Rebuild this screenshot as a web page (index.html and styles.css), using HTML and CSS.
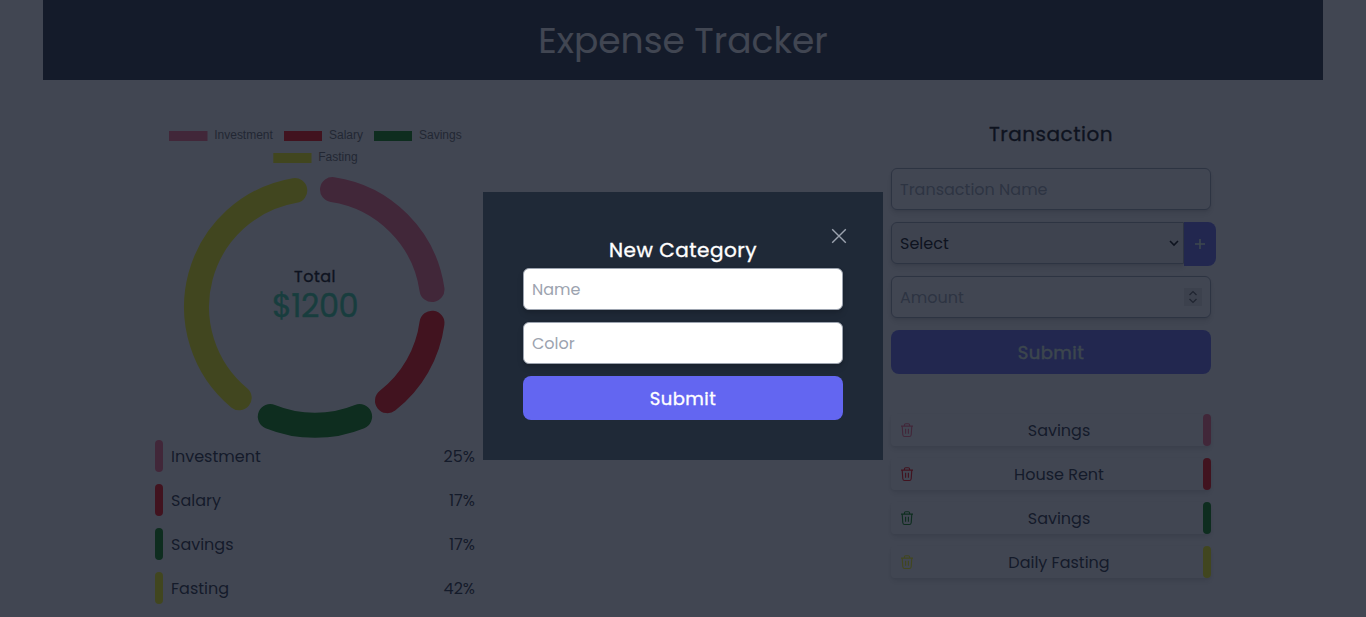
FILE: index.html
```html
<!DOCTYPE html>
<html lang="en">
<head>
<meta charset="utf-8">
<title>Expense Tracker</title>
<link rel="stylesheet" href="styles.css">
</head>
<body>
<svg width="0" height="0" class="sprite">
  <symbol id="trash" viewBox="0 0 16 16">
    <path d="M2 4.1h12M5.4 4V3q0-1.3 1.3-1.3h2.6q1.3 0 1.3 1.3v1M3.2 4.3l.6 8.5q.2 1.7 1.8 1.7h4.8q1.6 0 1.8-1.7l.6-8.5M6.6 6.7v5M9.4 6.7v5" fill="none" stroke="currentColor" stroke-width="1.15"/>
  </symbol>
</svg>
<div class="container">
  <header class="header"><h1>Expense Tracker</h1></header>
  <main class="main">
    <section class="column">
      <div class="chart">
        <svg width="320" height="320" viewBox="155 120 320 320">
          <g class="legend">
            <rect x="169" y="131" width="38.5" height="10" fill="#ff6384"/><text x="214.3" y="139" textLength="58.5">Investment</text>
            <rect x="284" y="131" width="38" height="10" fill="#f00"/><text x="329" y="139" textLength="34">Salary</text>
            <rect x="374" y="131" width="38" height="10" fill="#008000"/><text x="419" y="139" textLength="42.7">Savings</text>
            <rect x="273.3" y="153" width="38.2" height="10" fill="#ff0"/><text x="318.3" y="161" textLength="39.3">Fasting</text>
          </g>
          <g fill="none" stroke-width="25" stroke-linecap="round">
            <path stroke="#ff6384" d="M332.5 189.6A118.1 118.1 0 0 1 432 289.6"/>
            <path stroke="#f00" d="M432 323.2A118.1 118.1 0 0 1 387.5 400.7"/>
            <path stroke="#008000" d="M359.6 416.6A118.1 118.1 0 0 1 270.3 416.6"/>
            <path stroke="#ff0" d="M239.2 397.8A118.1 118.1 0 0 1 294.8 190.5"/>
          </g>
        </svg>
        <div class="total"><span class="total-label">Total</span><span class="total-value">$1200</span></div>
      </div>
      <div class="list">
        <div class="label"><i class="bar pink"></i><span class="name">Investment</span><span class="pct">25%</span></div>
        <div class="label"><i class="bar red"></i><span class="name">Salary</span><span class="pct">17%</span></div>
        <div class="label"><i class="bar green"></i><span class="name">Savings</span><span class="pct">17%</span></div>
        <div class="label"><i class="bar yellow"></i><span class="name">Fasting</span><span class="pct">42%</span></div>
      </div>
    </section>
    <section class="column">
      <h2 class="title">Transaction</h2>
      <form class="form">
        <div class="input"><span class="hint">Transaction Name</span></div>
        <div class="select-row">
          <div class="select"><span class="hint-dark">Select</span>
            <svg width="10" height="7" viewBox="0 0 10 7"><path d="M1 1l4 4 4-4" fill="none" stroke="#000" stroke-width="1.6"/></svg>
          </div>
          <div class="plus"><svg width="10" height="10" viewBox="0 0 10 10"><path d="M0 5h10M5 0v10" stroke="#e6ffe6" stroke-width="1.6"/></svg></div>
        </div>
        <div class="input"><span class="hint">Amount</span>
          <div class="spinner"><svg width="18" height="18" viewBox="0 0 18 18"><path d="M5.5 7L9 3.6 12.5 7M5.5 11L9 14.4 12.5 11" fill="none" stroke="#555" stroke-width="1.3"/></svg></div>
        </div>
        <div class="submit">Submit</div>
      </form>
      <div class="list history">
        <div class="item"><svg class="c-pink" width="16" height="16"><use href="#trash"/></svg><span>Savings</span><i class="bar pink"></i></div>
        <div class="item"><svg class="c-red" width="16" height="16"><use href="#trash"/></svg><span>House Rent</span><i class="bar red"></i></div>
        <div class="item"><svg class="c-green" width="16" height="16"><use href="#trash"/></svg><span>Savings</span><i class="bar green"></i></div>
        <div class="item"><svg class="c-yellow" width="16" height="16"><use href="#trash"/></svg><span>Daily Fasting</span><i class="bar yellow"></i></div>
      </div>
    </section>
  </main>
</div>
<div class="overlay">
  <div class="modal">
    <svg class="close" width="16" height="16" viewBox="0 0 16 16"><path d="M1.2 1.2l13.6 13.6M14.8 1.2L1.2 14.8" stroke="#9ca3af" stroke-width="1.4"/></svg>
    <h2 class="modal-title">New Category</h2>
    <div class="form">
      <div class="input"><span class="hint">Name</span></div>
      <div class="input"><span class="hint">Color</span></div>
      <div class="submit">Submit</div>
    </div>
  </div>
</div>
</body>
</html>
```
FILE: styles.css
```css
* { box-sizing: border-box; }
body {
  margin: 0;
  height: 617px;
  overflow: hidden;
  background: #fff;
  color: #1f2937;
  font: 16px/24px Poppins, Inter, "Noto Sans", sans-serif;
}
h1, h2 { margin: 0; }
.sprite { position: absolute; }
.container { width: 1280px; margin: 0 auto; }
.header {
  height: 80px;
  display: flex;
  align-items: center;
  justify-content: center;
  padding-top: 2px;
  background: #1e293b;
  color: #fff;
}
.header h1 { font-size: 36px; font-weight: 400; line-height: 40px; }
.main { display: flex; justify-content: center; gap: 416px; padding-top: 40px; }
.column { width: 320px; }
.chart { display: grid; height: 320px; }
.chart > * { grid-area: 1 / 1; }
.legend { font: 12px "Liberation Sans", Arial, sans-serif; fill: #666; }
.total { display: flex; flex-direction: column; align-items: center; padding-top: 145px; color: #000; }
.total-label, .title, .modal-title, .submit { font-weight: 400; -webkit-text-stroke: .35px currentColor; }
.total-label { line-height: 24px; letter-spacing: .5px; }
.total-value { font-size: 32px; line-height: 34px; color: #34d399; letter-spacing: -.5px; -webkit-text-stroke: .4px currentColor; }
.list { display: flex; flex-direction: column; gap: 12px; }
.label { display: flex; height: 32px; align-items: center; }
.name, .pct { padding-top: 2px; }
.bar { width: 8px; height: 32px; border-radius: 4px; }
.name { margin-left: 8px; flex: 1; }
.pink { background: #ff6384; }
.red { background: #f00; }
.green { background: #008000; }
.yellow { background: #ff0; }
.c-pink { color: #ff6384; }
.c-red { color: #f00; }
.c-green { color: #008000; }
.c-yellow { color: #ff0; }
.title { height: 48px; line-height: 28px; font-size: 20px; text-align: center; color: #000; letter-spacing: .5px; }
.form { display: flex; flex-direction: column; gap: 12px; }
.input, .select {
  display: flex;
  align-items: center;
  justify-content: space-between;
  height: 42px;
  padding: 0 8px;
  border: 1px solid #9ca3af;
  border-radius: 6px;
  background: #fff;
  box-shadow: 0 4px 6px rgba(0, 0, 0, .12), 0 1px 3px rgba(0, 0, 0, .1);
}
.hint { color: #9ca3af; padding-top: 2px; }
.hint-dark { padding-top: 2px; }
.select-row { display: flex; height: 42px; }
.select { flex: none; width: 293px; background: #efefef; border-radius: 6px 0 0 6px; padding-right: 4px; color: #000; }
.plus { width: 32px; height: 44px; flex: none; display: flex; align-items: center; justify-content: center; background: #6366f1; border-radius: 0 8px 8px 0; }
.spinner { width: 18px; height: 18px; background: #e4e4e4; display: flex; }
.submit {
  height: 44px;
  padding-top: 1px;
  border-radius: 8px;
  background: #6366f1;
  color: #fff;
  font-size: 18px;
  line-height: 44px;
  text-align: center;
  letter-spacing: .45px;
}
.column .submit { color: #e6ffe6; }
.history { margin-top: 40px; }
.item {
  display: flex;
  height: 32px;
  align-items: center;
  padding-left: 8px;
  border-radius: 4px;
  box-shadow: 0 4px 6px rgba(0, 0, 0, .1), 0 1px 3px rgba(0, 0, 0, .08);
}
.item span { flex: 1; text-align: center; padding-top: 2px; }
.overlay {
  position: fixed;
  inset: 0;
  display: flex;
  align-items: flex-start;
  justify-content: center;
  padding-top: 192px;
  background: rgba(17, 24, 39, .8);
}
.modal { width: 400px; height: 268px; padding: 40px; background: #1f2937; display: grid; align-content: start; }
.modal-title { grid-area: 1 / 1; height: 36px; line-height: 36px; font-size: 20px; color: #fff; text-align: center; letter-spacing: .5px; }
.close { grid-area: 1 / 1; justify-self: end; margin: -4px -4px 0 0; }
```
